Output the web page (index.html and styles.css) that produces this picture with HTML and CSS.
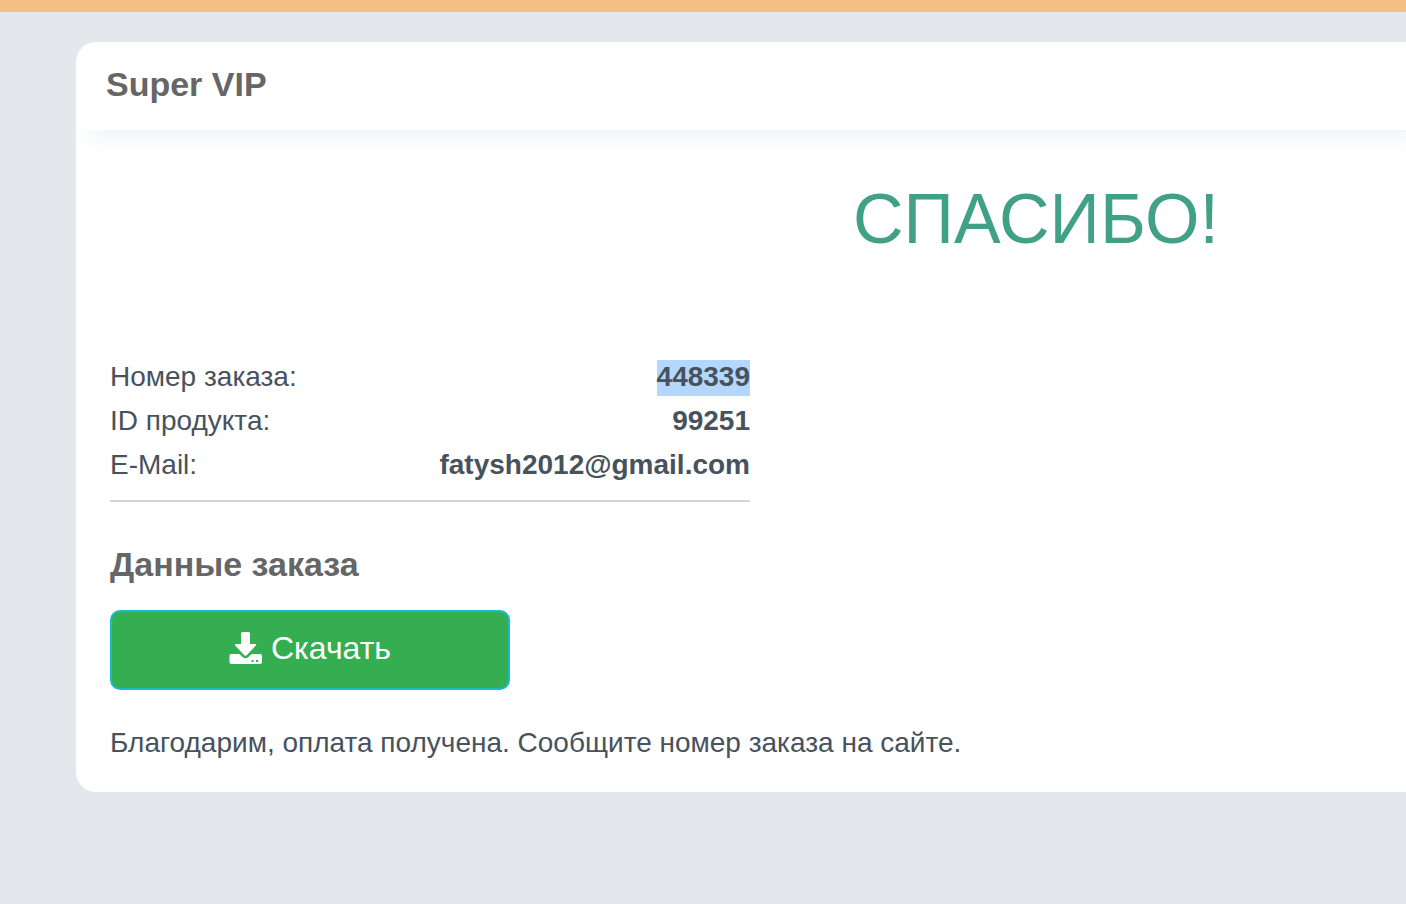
FILE: index.html
```html
<!DOCTYPE html>
<html lang="ru">
<head>
  <title>Super VIP</title>
  <meta charset="UTF-8">
  <link rel="stylesheet" href="styles.css">
</head>
<body>
  <div class="topbar"></div>
  <main class="card">
    <header class="card-header">
      <h2>Super VIP</h2>
    </header>
    <div class="card-body">
      <h1>СПАСИБО!</h1>
      <table class="order">
        <tr>
          <th scope="row">Номер заказа:</th>
          <td><mark>448339</mark></td>
        </tr>
        <tr>
          <th scope="row">ID продукта:</th>
          <td>99251</td>
        </tr>
        <tr>
          <th scope="row">E-Mail:</th>
          <td>fatysh2012@gmail.com</td>
        </tr>
      </table>
      <h2>Данные заказа</h2>
      <button type="button" class="download">
        <svg width="34" height="34" viewBox="0 0 34 34" aria-hidden="true">
          <path fill="#fff" d="M13.500 1h6q1.500 0 1.500 1.500V13h5q2 0 .8 1.600l-8.600 9.200q-1.700 1.700-3.400 0L6.200 14.600Q5 13 7 13h5V2.500Q12 1 13.500 1z"/>
          <path fill="#fff" fill-rule="evenodd" d="M2 23h8.500l3 3q3 2.600 6 0l3-3H31q2 0 2 2v6q0 2-2 2H2.500q-2 0-2-2v-6q0-2 1.500-2zM22.500 29v2h2v-2zM27 29v2h2v-2z"/>
        </svg>
        <span>Скачать</span>
      </button>
      <p>Благодарим, оплата получена. Сообщите номер заказа на сайте.</p>
    </div>
  </main>
</body>
</html>
```
FILE: styles.css
```css
body {
  margin: 0;
  font-family: "Liberation Sans", Arial, sans-serif;
  font-size: 28px;
  line-height: 44px;
  color: #47525d;
  background-color: #e4e8ec;
}
.topbar {
  height: 12px;
  background-color: #f5be84;
}
.card {
  margin: 30px 0 30px 76px;
  background-color: #fff;
  border-radius: 20px 0 0 20px;
  overflow: hidden;
}
.card-header {
  padding: 20px 30px 24px;
  box-shadow: 12px 10px 20px #f1f5f7;
}
h1 {
  margin: 0 0 96px;
  padding-left: 556px;
  font-size: 70px;
  line-height: 80px;
  font-weight: normal;
  text-align: center;
  color: #40a187;
}
h2 {
  margin: 0;
  font-size: 34px;
  line-height: 44px;
  color: #666;
}
.card-body {
  padding: 49px 0 27px 34px;
}
.order {
  width: 640px;
  margin-bottom: 40px;
  padding-bottom: 13px;
  border-spacing: 0;
  border-bottom: 2px solid #d4d4d4;
}
.order th,
.order td {
  padding: 0;
}
.order th {
  font-weight: normal;
  text-align: left;
}
.order td {
  font-weight: bold;
  text-align: right;
}
mark {
  padding: 1px 0 4px;
  color: inherit;
  background-color: #b4d7ff;
}
.download {
  display: flex;
  align-items: center;
  justify-content: center;
  gap: 8px;
  width: 400px;
  height: 80px;
  margin: 24px 0 31px;
  padding: 0 0 4px;
  font-family: inherit;
  font-size: 32px;
  color: #fff;
  background-color: #34ae51;
  border: 2px solid #17bccf;
  border-radius: 10px;
  cursor: pointer;
}
.download:hover {
  background-color: #2c9746;
}
p {
  margin: 0;
}
```
